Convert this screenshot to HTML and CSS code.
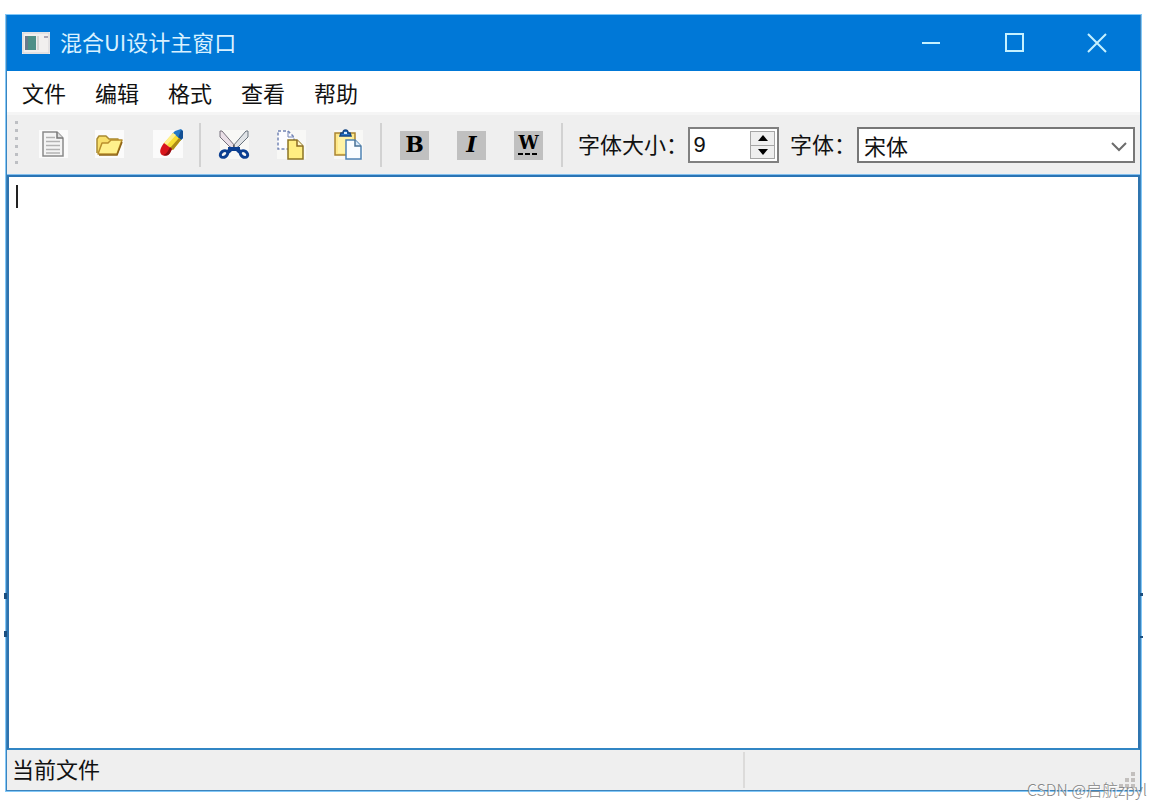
FILE: index.html
```html
<!DOCTYPE html>
<html lang="zh-CN">
<head>
<meta charset="utf-8">
<title>混合UI设计主窗口</title>
<link rel="stylesheet" href="styles.css">
</head>
<body>
<main class="window">
  <header class="titlebar">
    <svg class="app-icon" width="28" height="22" viewBox="0 0 28 22" aria-hidden="true">
      <rect width="28" height="22" fill="#f1efee"/>
      <path d="M1 1h26v20H1z" fill="none" stroke="#d5d3d6"/>
      <rect x="3" y="4" width="11" height="14" fill="#4f8f86"/>
      <path d="M3 4h3v14H3z" fill="#687a8c"/>
      <path d="M16 4v14" stroke="#d9d5d2" stroke-width="2"/>
      <path d="M22 5h4" stroke="#a9a5b5" stroke-width="2"/>
    </svg>
    <h1 class="title">混合UI设计主窗口</h1>
    <div class="window-controls">
      <button class="control" aria-label="最小化"><svg width="20" height="20" viewBox="0 0 20 20"><path d="M1 10h18"/></svg></button>
      <button class="control" aria-label="最大化"><svg width="20" height="20" viewBox="0 0 20 20"><path d="M2 1h17v17H2z"/></svg></button>
      <button class="control" aria-label="关闭"><svg width="20" height="20" viewBox="0 0 20 20"><path d="M1 1l18 18M19 1L1 19"/></svg></button>
    </div>
  </header>

  <nav class="menubar">
    <button class="menu">文件</button>
    <button class="menu">编辑</button>
    <button class="menu">格式</button>
    <button class="menu">查看</button>
    <button class="menu">帮助</button>
  </nav>

  <div class="toolbar">
    <span class="grip"></span>
    <button class="tool" aria-label="新建">
      <svg width="30" height="30" viewBox="0 0 30 30">
        <rect x="1" width="29" height="28" fill="#fbfbfb"/>
        <path d="M5 2h14l6 6v18H5z" fill="#f4f4f4" stroke="#8a8a8a" stroke-width="1.500"/>
        <path d="M19 2v6h6" fill="#ddd" stroke="#777" stroke-width="1.500"/>
        <path d="M8 7.500h9M8 11.500h14M8 15.500h14M8 19.500h14M8 23h14" stroke="#b2b2b2" stroke-width="1.500"/>
      </svg>
    </button>
    <button class="tool" aria-label="打开">
      <svg width="30" height="30" viewBox="0 0 30 30">
        <rect x="0" width="29" height="28" fill="#fbfbfb"/>
        <path d="M2 23V9l2-3h7l3 3h9v4" fill="#f8df6a" stroke="#a98a32" stroke-width="1.500" stroke-linejoin="round"/>
        <path d="M3 24l4-11h6l3-3h11l-5 14z" fill="#fff08c" stroke="#b98f2c" stroke-width="1.500" stroke-linejoin="round"/>
        <path d="M4 25h18l5-13" fill="none" stroke="#8f6415" stroke-width="1.500"/>
      </svg>
    </button>
    <button class="tool" aria-label="保存">
      <svg width="34" height="30" viewBox="-2 0 34 30">
        <rect x="1" width="30" height="28" fill="#fbfbfb"/>
        <path d="M23 1l6-2 2 2v7l-3 3-8-7z" fill="#247ac8"/>
        <path d="M29 0l2 1v7l-3 3-2-3z" fill="#124f93"/>
        <path d="M21 3l8 7-8 10-9-7z" fill="#f6df35"/>
        <path d="M21 3l3 2-9 10-3-2z" fill="#fff18d"/>
        <path d="M27 8l2 2-8 10-3-2z" fill="#ad8b16"/>
        <path d="M12 13l8 6-2 4c-2 4-8 3-9 1-2-3 0-7 3-11z" fill="#d9151b"/>
        <path d="M18 17l2 2-2 4c-2 3-5 3-7 2 4-1 5-4 7-8z" fill="#8e0c12"/>
      </svg>
    </button>
    <span class="separator"></span>
    <button class="tool" aria-label="剪切">
      <svg width="30" height="30" viewBox="0 0 30 30">
        <rect x="1" width="29" height="29" fill="#f8f8f6"/>
        <path d="M1 1h2l13 15-3 3L1 7z" fill="#eadfe7" stroke="#77717c"/>
        <path d="M29 1h-2L14 16l3 3L29 7z" fill="#e0e3e6" stroke="#68727c"/>
        <path d="M9 19h12M13 18l-4 4M17 18l4 4" stroke="#0c3f91" stroke-width="4"/>
        <ellipse cx="5" cy="24" rx="4" ry="3" transform="rotate(-35 5 24)" fill="#f8f8f6" stroke="#0c3f91" stroke-width="3"/>
        <ellipse cx="25" cy="24" rx="4" ry="3" transform="rotate(35 25 24)" fill="#f8f8f6" stroke="#0c3f91" stroke-width="3"/>
        <circle cx="15" cy="16" r="1" fill="#555"/>
      </svg>
    </button>
    <button class="tool" aria-label="复制">
      <svg width="30" height="30" viewBox="0 0 30 30">
        <rect x="1" width="29" height="29" fill="#f8f8f6"/>
        <path d="M2 1h10l6 6v12H2z" fill="#fcfcff" stroke="#7384b4" stroke-width="1.500" stroke-dasharray="3 2"/>
        <path d="M12 1v6h6" fill="none" stroke="#7384b4"/>
        <path d="M12 10h9l6 6v13H12z" fill="#ffee82" stroke="#8c7425" stroke-width="1.500"/>
        <path d="M21 10v6h6" fill="#fff8cc" stroke="#8c6b22" stroke-width="1.500"/>
      </svg>
    </button>
    <button class="tool" aria-label="粘贴">
      <svg width="30" height="30" viewBox="0 0 30 30">
        <rect x="1" width="29" height="29" fill="#f8f8f6"/>
        <path d="M2 3h20v22H2z" fill="#ffe98a" stroke="#a98432" stroke-width="1.500"/>
        <path d="M5 6h14v17H5z" fill="#fff3a6"/>
        <path d="M7 6l1-3h2c0-4 5-4 5 0h2l1 3z" fill="#2675c9" stroke="#164784" stroke-width="1.500"/>
        <path d="M11 3h3" stroke="#d8edff" stroke-width="2"/>
        <path d="M13 10h9l6 6v13H13z" fill="#fafdff" stroke="#4f83b4" stroke-width="1.500"/>
        <path d="M22 10v6h6" fill="#d8eafa" stroke="#4a7195" stroke-width="1.500"/>
      </svg>
    </button>
    <span class="separator"></span>
    <button class="tool"><span class="letter">B</span></button>
    <button class="tool"><span class="letter italic">I</span></button>
    <button class="tool"><span class="letter under">W</span></button>
    <span class="separator"></span>
    <label class="field-label" for="size">字体大小：</label>
    <div class="spinbox">
      <input class="size" id="size" type="number" value="9">
      <div class="steps">
        <button class="step" aria-label="增大"><svg width="10" height="6" viewBox="0 0 10 6"><path d="M5 0l5 6H0z"/></svg></button>
        <button class="step" aria-label="减小"><svg width="10" height="6" viewBox="0 0 10 6"><path d="M0 0h10L5 6z"/></svg></button>
      </div>
    </div>
    <label class="field-label font-label" for="font">字体：</label>
    <div class="combo">
      <select class="font" id="font"><option>宋体</option></select>
      <svg class="chevron" width="16" height="10" viewBox="0 0 16 10" aria-hidden="true"><path d="M1 1l7 7 7-7"/></svg>
    </div>
  </div>

  <section class="editor">
    <textarea class="text" aria-label="正文"></textarea>
    <span class="caret"></span>
  </section>

  <footer class="statusbar">
    <span class="status">当前文件</span>
    <span class="status-extra"></span>
    <svg class="size-grip" width="16" height="16" viewBox="0 0 16 16" aria-hidden="true">
      <path d="M12 0h4v4h-4zM6 6h4v4H6zM12 6h4v4h-4zM0 12h4v4H0zM6 12h4v4H6zM12 12h4v4h-4z" fill="#c2bfbd"/>
    </svg>
  </footer>
  <i class="tick left-high"></i>
  <i class="tick left-low"></i>
  <i class="tick right-high"></i>
  <i class="tick right-low"></i>
</main>
<div class="watermark">CSDN @启航zpyl</div>
</body>
</html>
```

FILE: styles.css
```css
* { box-sizing: border-box; }

body {
  margin: 0;
  height: 100vh;
  padding: 14px 19px 16px 5px;
  background: #fff;
  color: #111;
  font-family: "Noto Sans CJK SC", sans-serif;
  font-size: 22px;
  line-height: 32px;
}

button, input, select, textarea {
  margin: 0;
  padding: 0;
  border: 0;
  border-radius: 0;
  background: none;
  color: inherit;
  font: inherit;
  outline: none;
}

.window {
  position: relative;
  display: flex;
  flex-direction: column;
  height: 100%;
  border: 1px solid #82c8f8;
  box-shadow: inset 0 0 0 1px #3d84bd;
  padding: 0 1px 1px;
}

.titlebar {
  display: flex;
  align-items: center;
  flex: none;
  height: 56px;
  padding: 0 2px 0 15px;
  background: #0078d7;
  color: #d9f1ff;
}

.title {
  flex: 1;
  margin: 0 0 0 10px;
  padding-bottom: 4px;
  font-size: 22px;
  font-weight: 400;
}

.window-controls { display: flex; }

.control {
  display: grid;
  place-items: center;
  width: 83px;
  height: 56px;
}

.control svg {
  fill: none;
  stroke: #c5f1ff;
  stroke-width: 2;
}

.menubar {
  display: flex;
  gap: 29px;
  flex: none;
  height: 44px;
  padding: 4px 15px;
  background: #fff;
  border-bottom: 3px solid #f5f5f5;
}

.toolbar {
  display: flex;
  align-items: center;
  flex: none;
  height: 60px;
  padding-right: 5px;
  background: #efefef;
}

.grip {
  width: 3px;
  height: 48px;
  margin: 0 6px 0 8px;
  background: repeating-linear-gradient(#bdbfc3 0 3px, transparent 3px 8px);
}

.tool {
  display: grid;
  place-items: center;
  flex: none;
  width: 57px;
  height: 44px;
}

.tool svg { overflow: visible; }

.separator {
  flex: none;
  width: 2px;
  height: 44px;
  margin: 0 4px;
  background: #d2d2d2;
}

.letter {
  width: 29px;
  height: 29px;
  background: #c0c0c0;
  color: #000;
  font: bold 22px/27px "DejaVu Serif", serif;
  text-align: center;
}

.italic { font-style: italic; }

.under {
  font-size: 18px;
  line-height: 24px;
  background: repeating-linear-gradient(90deg, #000 0 5px, #c0c0c0 5px 7px) 4px 22px / 20px 2px no-repeat #c0c0c0;
}

.field-label {
  flex: none;
  margin-left: 11px;
  padding-bottom: 4px;
  white-space: nowrap;
}

.font-label { width: 67px; }

.spinbox {
  display: flex;
  flex: none;
  width: 91px;
  height: 36px;
  padding: 2px;
  border: 2px solid #808080;
  background: #fff;
}

.size {
  flex: 1;
  min-width: 0;
  padding: 3px 0 0 1px;
  appearance: textfield;
  font: 22px/24px "Liberation Mono", monospace;
}

.size::-webkit-inner-spin-button { display: none; }

.steps {
  display: flex;
  flex-direction: column;
  width: 25px;
  border: 1px solid #a6a6a6;
  background: #efefef;
}

.step {
  display: grid;
  place-items: center;
  flex: 1;
}

.step + .step { border-top: 1px solid #a6a6a6; }

.combo {
  position: relative;
  flex: 1;
  height: 36px;
  border: 2px solid #777;
  background: #fff;
}

.font {
  display: block;
  width: 100%;
  height: 100%;
  padding: 0 0 3px 5px;
  appearance: none;
}

.chevron {
  position: absolute;
  top: 13px;
  right: 6px;
  fill: none;
  stroke: #6c6c6c;
  stroke-width: 2;
  pointer-events: none;
}

.editor {
  position: relative;
  flex: 1;
  min-height: 0;
  border: 2px solid #2f74ae;
  border-bottom-color: #3186c4;
  border-top-color: #2b74b4;
  box-shadow: 0 -1px #82bfee;
}

.text {
  display: block;
  width: 100%;
  height: 100%;
  padding: 6px 8px;
  background: #fff;
  resize: none;
}

.caret {
  position: absolute;
  top: 8px;
  left: 7px;
  width: 2px;
  height: 23px;
  background: #222;
}

.statusbar {
  display: flex;
  flex: none;
  height: 40px;
  padding: 2px 5px;
  background: #efefef;
}

.status { flex: 732; }

.status-extra {
  flex: 374;
  border-left: 2px solid #dcdbda;
}

.size-grip { align-self: flex-end; }

.tick {
  position: absolute;
  width: 3px;
  height: 6px;
  background: #1b4f80;
}

.left-high { left: -2px; bottom: 192px; }
.left-low { left: -2px; bottom: 154px; }
.right-high { right: -2px; bottom: 195px; height: 3px; }
.right-low { right: -2px; bottom: 153px; height: 2px; }

.watermark {
  position: absolute;
  right: 14px;
  bottom: 7px;
  color: #858585;
  font-size: 16px;
  font-weight: 300;
  line-height: 24px;
  text-shadow: 1px 1px #fff;
}
```
